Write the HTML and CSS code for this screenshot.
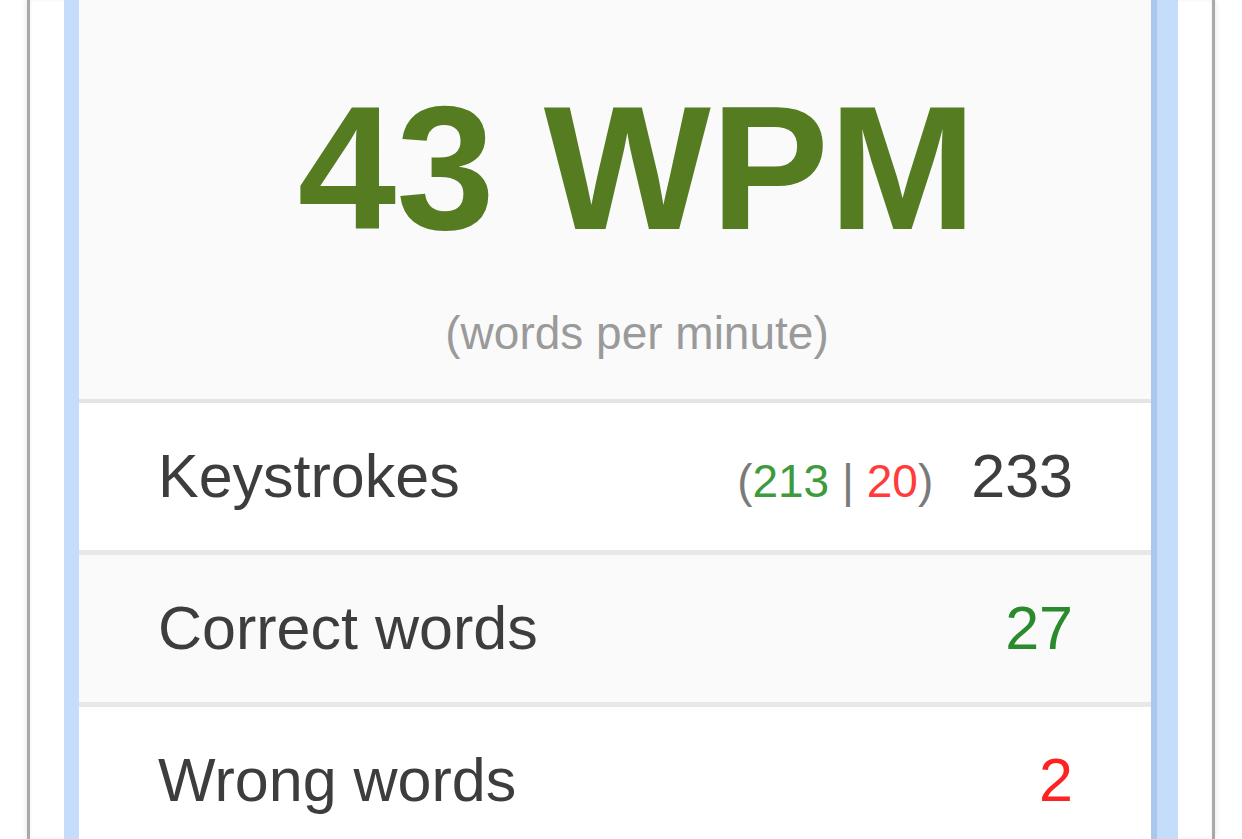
FILE: index.html
```html
<!DOCTYPE html>
<html>
<head>
<meta charset="utf-8">
<link rel="stylesheet" href="styles.css">
</head>
<body>
<div class="frame">
  <div class="panel">
    <div class="card">
      <div class="summary">
        <div class="wpm">43 WPM</div>
        <div class="wpm-note">(words per minute)</div>
      </div>
      <div class="row row-white">
        <span class="label">Keystrokes</span>
        <span class="value">
          <span class="detail">(<span class="good">213</span> | <span class="bad">20</span>)</span>
          <span class="total">233</span>
        </span>
      </div>
      <div class="row row-grey">
        <span class="label">Correct words</span>
        <span class="value"><span class="total good-strong">27</span></span>
      </div>
      <div class="row row-white">
        <span class="label">Wrong words</span>
        <span class="value"><span class="total bad-strong">2</span></span>
      </div>
    </div>
  </div>
</div>
</body>
</html>
```

FILE: styles.css
```css
html, body {
  margin: 0;
  padding: 0;
  background: #ffffff;
  overflow: hidden;
}

body {
  font-family: "Liberation Sans", Arial, sans-serif;
  height: 839px;
}

.frame {
  margin-left: 27px;
  width: 1114px;
  height: 839px;
  border-left: 3px solid #a9a9a9;
  border-right: 3px solid #a9a9a9;
  box-shadow: 0 0 6px rgba(0, 0, 0, 0.12), inset 0 0 4px rgba(0, 0, 0, 0.06);
  padding: 0 34px;
  box-sizing: content-box;
  display: flex;
  background: #ffffff;
}

.panel {
  flex: 1;
  border-left: 15px solid #c4ddfb;
  border-right: 21px solid #c4ddfb;
  display: flex;
}

.card {
  flex: 1;
  border-right: 6px solid #a9c8ee;
  display: flex;
  flex-direction: column;
  background: #ffffff;
}

.summary {
  height: 403px;
  flex: none;
  background: #fafafa;
  border-bottom: 4px solid #e4e4e4;
  display: flex;
  flex-direction: column;
  align-items: center;
  padding-left: 44px;
  box-sizing: border-box;
}

.wpm {
  margin-top: 80px;
  font-size: 177px;
  line-height: 1;
  font-weight: bold;
  color: #567c22;
}

.wpm-note {
  margin-top: 53px;
  font-size: 46px;
  line-height: 1;
  color: #9a9a9a;
}

.row {
  flex: none;
  height: 147px;
  border-bottom: 5px solid #e8e8e8;
  display: flex;
  align-items: center;
  justify-content: space-between;
  padding: 0 78px 0 79px;
  box-sizing: content-box;
}

.row-white {
  background: #ffffff;
}

.row-grey {
  background: #fafafa;
}

.label {
  font-size: 61px;
  color: #3d3d3d;
  line-height: 1;
}

.value {
  display: flex;
  align-items: baseline;
}

.detail {
  font-size: 46px;
  color: #7a7a7a;
  margin-right: 38px;
  line-height: 1;
}

.good {
  color: #3d9a3d;
}

.bad {
  color: #ff3b3b;
}

.total {
  font-size: 61px;
  color: #3d3d3d;
  line-height: 1;
}

.good-strong {
  color: #2b8a2b;
}

.bad-strong {
  color: #ff2222;
}
```
